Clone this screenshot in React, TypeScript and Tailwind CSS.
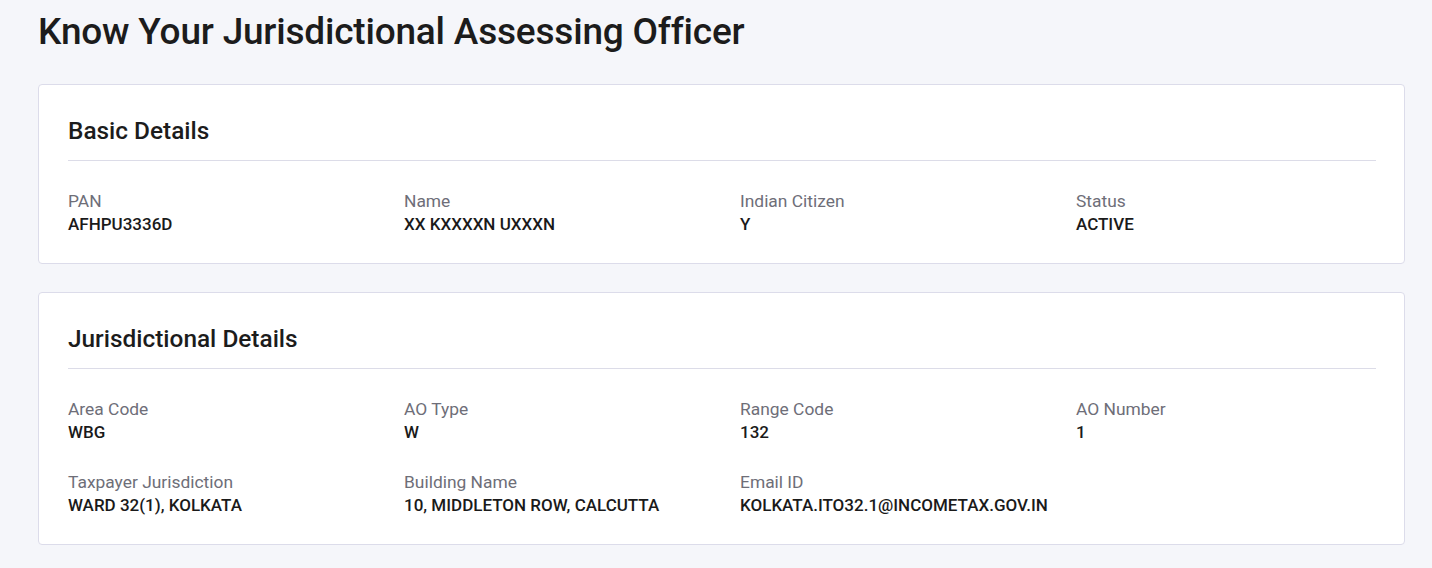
const basic = [
  { label: 'PAN', value: 'AFHPU3336D' },
  { label: 'Name', value: 'XX KXXXXN UXXXN' },
  { label: 'Indian Citizen', value: 'Y' },
  { label: 'Status', value: 'ACTIVE' },
];

const jurisdiction = [
  { label: 'Area Code', value: 'WBG' },
  { label: 'AO Type', value: 'W' },
  { label: 'Range Code', value: '132' },
  { label: 'AO Number', value: '1' },
  { label: 'Taxpayer Jurisdiction', value: 'WARD 32(1), KOLKATA' },
  { label: 'Building Name', value: '10, MIDDLETON ROW, CALCUTTA' },
  { label: 'Email ID', value: 'KOLKATA.ITO32.1@INCOMETAX.GOV.IN' },
];

function Card({ title, items }: { title: string; items: { label: string; value: string }[] }) {
  return (
    <section className="rounded-[4px] border border-[#dcdcea] bg-white pt-[32px] pb-[27px] pl-[29px] pr-[28px]">
      <h2 className="text-[24.4px] leading-[28px] font-medium text-[#1c1c1c] pb-[15px] border-b border-[#dcdce8]">
        {title}
      </h2>
      <div className="mt-[29px] grid grid-cols-[336px_336px_336px_1fr] gap-y-[27px]">
        {items.map((it) => (
          <div key={it.label} className="flex flex-col">
            <span className="text-[17.4px] leading-[23px] text-[#6e6e78]">{it.label}</span>
            <span className="text-[17px] leading-[23px] font-medium text-[#1a1a1a]">{it.value}</span>
          </div>
        ))}
      </div>
    </section>
  );
}

export default function App() {
  return (
    <div className="min-h-[568px] bg-[#f5f6fa] pl-[38px] pr-[27px] pt-[11px] pb-[23px] font-['Roboto',sans-serif]">
      <h1 className="text-[37px] leading-[42px] font-medium tracking-[-0.2px] text-[#1c1c1c]">
        Know Your Jurisdictional Assessing Officer
      </h1>
      <div className="mt-[31px] flex flex-col gap-[28px]">
        <Card title="Basic Details" items={basic} />
        <Card title="Jurisdictional Details" items={jurisdiction} />
      </div>
    </div>
  );
}
